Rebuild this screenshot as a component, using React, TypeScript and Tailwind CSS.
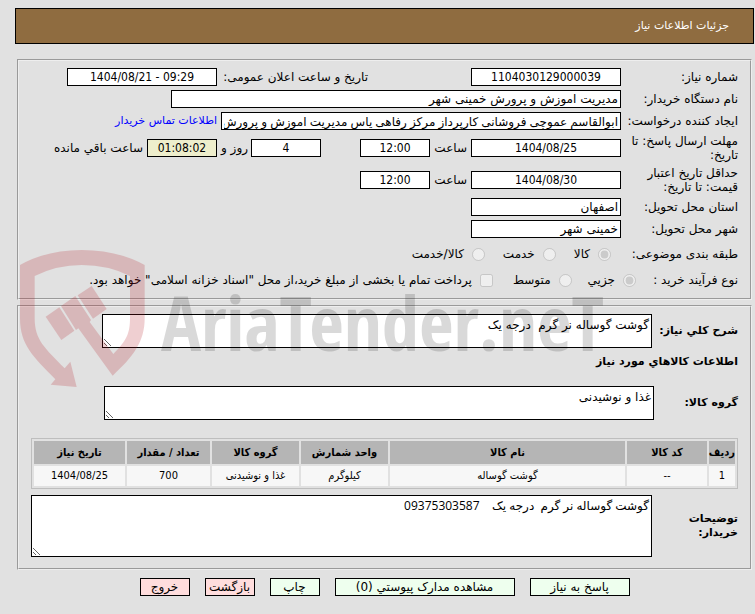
import type { ReactNode } from "react";
import clsx from "clsx";

const columns = [
  { title: "ردیف", width: "w-[26px]" },
  { title: "کد کالا", width: "w-[80px]" },
  { title: "نام کالا", width: "" },
  { title: "واحد شمارش", width: "w-[87px]" },
  { title: "گروه کالا", width: "w-[87px]" },
  { title: "تعداد / مقدار", width: "w-[83px]" },
  { title: "تاریخ نیاز", width: "w-[91px]" },
];

const items = [["1", "--", "گوشت گوساله", "کیلوگرم", "غذا و نوشیدنی", "700", "1404/08/25"]];

const subjects = ["کالا", "خدمت", "کالا/خدمت"];

const actions = [
  { title: "پاسخ به نیاز", style: "w-[100px] bg-[#eeffee]" },
  { title: "مشاهده مدارک پیوستي (0)", style: "w-[180px] bg-[#eeffee]" },
  { title: "چاپ", style: "w-[50px] bg-[#eeffee]" },
  { title: "بازگشت", style: "w-[50px] bg-[#ffdddd]" },
  { title: "خروج", style: "w-[50px] bg-[#ffdddd]" },
];

type FieldProps = {
  id: string;
  value: string;
  className: string;
  numeric?: boolean;
};

function Field({ id, value, className, numeric }: FieldProps) {
  return (
    <input
      id={id}
      dir={numeric ? "ltr" : "rtl"}
      readOnly
      defaultValue={value}
      className={clsx(
        "h-[18px] shrink-0 border border-black px-0.5 outline-none",
        numeric && "text-center font-['DejaVu_Sans_Condensed','DejaVu_Sans',sans-serif]",
        className
      )}
    />
  );
}

type RowProps = {
  label: string;
  htmlFor?: string;
  tall?: boolean;
  children: ReactNode;
};

function Row({ label, htmlFor, tall, children }: RowProps) {
  return (
    <div className={clsx("flex items-center", tall ? "h-8" : "h-[22px]")}>
      <label htmlFor={htmlFor} className="w-[117px] shrink-0 pl-1 leading-[14px]">
        {label}
      </label>
      {children}
    </div>
  );
}

const area =
  "block border border-black bg-white px-0.5 py-0.5 leading-4 outline-none resize";

const group = "border-2 border-[#eeeeee] [border-style:groove] px-3";

function Watermark() {
  return (
    <div
      dir="ltr"
      aria-hidden="true"
      className="pointer-events-none absolute left-5 top-[250px] flex"
    >
      <svg width="125" height="137" viewBox="30 30 375 411" fill="#b4141e" opacity="0.2">
        <path d="M30 75Q110 30 215 30Q322 30 404 75V235C404 305 370 350 308 407L205 265L198 270L153 198L196 168L243 240L239 246L310 342C350 302 360 280 360 235V108Q295 75 215 75Q140 75 74 108V235C74 300 105 325 164 385L181 365L200 441L122 434L136 418C70 350 30 315 30 235Z" />
        <path d="M107 230L148 202L193 272L154 300Z" />
        <path d="M203 166L245 138L290 207L249 236Z" />
      </svg>
      <span className="ml-4 mt-8 font-['Open_Sans_Condensed','Open_Sans',sans-serif] text-[75px] leading-[80px] font-bold text-black/15">
        AriaTender.neT
      </span>
    </div>
  );
}

export default function App() {
  return (
    <main
      dir="rtl"
      className="relative min-h-screen bg-[#e1e1e1] pt-2 pb-4 font-['DejaVu_Sans',sans-serif] text-[12px] leading-4 text-black"
    >
      <h1 className="mr-px ml-[15px] flex h-9 items-center border border-black bg-[#8f6c40] px-6 text-[11px] text-white">
        جزئیات اطلاعات نیاز
      </h1>

      <div className="mt-[15px] mr-[3px] ml-[17px] flex flex-col gap-[5px]">
        <section className={clsx(group, "pt-[5px] pb-1.5")}>
          <Row label="شماره نیاز:" htmlFor="number">
            <Field id="number" value="1104030129000039" className="w-[150px] bg-white" numeric />
            <label htmlFor="announced" className="mr-[103px] w-[151px] shrink-0">
              تاریخ و ساعت اعلان عمومی:
            </label>
            <Field id="announced" value="1404/08/21 - 09:29" className="w-[150px] bg-white" numeric />
          </Row>
          <Row label="نام دستگاه خریدار:" htmlFor="buyer">
            <Field id="buyer" value="مدیریت اموزش و پرورش خمینی شهر" className="w-[450px] bg-white" />
          </Row>
          <Row label="ایجاد کننده درخواست:" htmlFor="creator">
            <Field
              id="creator"
              value="ابوالقاسم عموچی فروشانی کارپرداز مرکز رفاهی یاس مدیریت اموزش و پرورش خمینی شهر"
              className="w-[400px] bg-white font-['Open_Sans','DejaVu_Sans',sans-serif]"
            />
            <a href="#contact" className="mr-1 text-[11px] text-[#0000ff]">
              اطلاعات تماس خریدار
            </a>
          </Row>
          <Row label="مهلت ارسال پاسخ: تا تاریخ:" htmlFor="deadline" tall>
            <Field id="deadline" value="1404/08/25" className="w-[150px] bg-white" numeric />
            <label htmlFor="deadlineTime" className="mr-1 w-[37px]">ساعت</label>
            <Field id="deadlineTime" value="12:00" className="w-[70px] bg-white" numeric />
            <Field id="days" value="4" className="mr-[39px] w-[70px] bg-white" numeric />
            <label htmlFor="days" className="mr-[3px] w-[31px]">روز و</label>
            <Field id="remaining" value="01:08:02" className="w-[70px] bg-[#eeeecc]" numeric />
            <label htmlFor="remaining" className="mr-1">ساعت باقي مانده</label>
          </Row>
          <Row label="حداقل تاریخ اعتبار قیمت: تا تاریخ:" htmlFor="valid" tall>
            <Field id="valid" value="1404/08/30" className="w-[150px] bg-white" numeric />
            <label htmlFor="validTime" className="mr-1 w-[37px]">ساعت</label>
            <Field id="validTime" value="12:00" className="w-[70px] bg-white" numeric />
          </Row>
          <Row label="استان محل تحویل:" htmlFor="province">
            <Field id="province" value="اصفهان" className="w-[150px] bg-white" />
          </Row>
          <Row label="شهر محل تحویل:" htmlFor="city">
            <Field id="city" value="خمینی شهر" className="w-[150px] bg-white" />
          </Row>

          <div className="flex h-7 items-center">
            <span className="w-[127px]">طبقه بندی موضوعی:</span>
            <div className="flex gap-[18px]">
              {subjects.map((subject, i) => (
                <label key={subject} className="flex items-center gap-2">
                  <input type="radio" name="subject" disabled defaultChecked={i === 0} className="size-[13px]" />
                  {subject}
                </label>
              ))}
            </div>
          </div>
          <div className="flex h-6 items-center">
            <span className="w-[102px]">نوع فرآیند خرید :</span>
            <label className="flex items-center gap-2">
              <input type="radio" name="process" disabled defaultChecked className="size-[13px]" />
              جزیي
            </label>
            <label className="mr-4 flex items-center gap-2">
              <input type="radio" name="process" disabled className="size-[13px]" />
              متوسط
            </label>
            <label className="mr-5 flex items-center gap-2">
              <input type="checkbox" disabled className="size-[13px]" />
              پرداخت تمام یا بخشی از مبلغ خرید،از محل "اسناد خزانه اسلامی" خواهد بود.
            </label>
          </div>
        </section>

        <section className={clsx(group, "pt-[7px] pb-[11px]")}>
          <div className="flex items-center">
            <label htmlFor="summary" className="w-[86px] shrink-0 text-[11px] font-bold">
              شرح کلي نیاز:
            </label>
            <textarea
              id="summary"
              readOnly
              defaultValue="گوشت گوساله نر گرم  درجه یک"
              className={clsx(area, "h-[34px] w-[550px]")}
            />
          </div>
          <h2 className="mt-1 text-[11px] leading-5 font-bold">اطلاعات کالاهاي مورد نیاز</h2>
          <div className="mt-3.5 flex items-center">
            <label htmlFor="category" className="w-[84px] shrink-0 text-[11px] font-bold">
              گروه کالا:
            </label>
            <textarea
              id="category"
              readOnly
              defaultValue="غذا و نوشیدنی"
              className={clsx(area, "h-[34px] w-[550px]")}
            />
          </div>

          <table className="mt-[18px] w-full table-fixed border-separate border-spacing-0.5 border border-[#bebebe] text-center text-[11px] leading-4">
            <thead>
              <tr>
                {columns.map((column) => (
                  <th
                    key={column.title}
                    className={clsx(
                      "h-[23px] bg-[#b5b5b5] font-['DejaVu_Sans_Condensed','DejaVu_Sans',sans-serif] whitespace-nowrap",
                      column.width
                    )}
                  >
                    {column.title}
                  </th>
                ))}
              </tr>
            </thead>
            <tbody>
              {items.map((item) => (
                <tr key={item[0]}>
                  {item.map((value, i) => (
                    <td
                      key={columns[i].title}
                      className="h-5 bg-[#f7f7f7] font-['DejaVu_Sans_Condensed','DejaVu_Sans',sans-serif]"
                    >
                      {value}
                    </td>
                  ))}
                </tr>
              ))}
            </tbody>
          </table>

          <div className="mt-1.5 flex items-center">
            <label htmlFor="notes" className="w-[86px] shrink-0 pl-6 text-[11px] leading-[14px] font-bold">
              توضیحات خریدار:
            </label>
            <textarea
              id="notes"
              readOnly
              defaultValue="گوشت گوساله نر گرم  درجه یک    09375303587"
              className={clsx(area, "h-[62px] flex-1 font-['Open_Sans','DejaVu_Sans',sans-serif]")}
            />
          </div>
        </section>
      </div>

      <div className="mt-2 mr-px ml-[15px] flex justify-center gap-[15px]">
        {actions.map((action) => (
          <button
            key={action.title}
            type="button"
            className={clsx("h-[18px] border border-black leading-4 whitespace-nowrap", action.style)}
          >
            {action.title}
          </button>
        ))}
      </div>

      <Watermark />
    </main>
  );
}
